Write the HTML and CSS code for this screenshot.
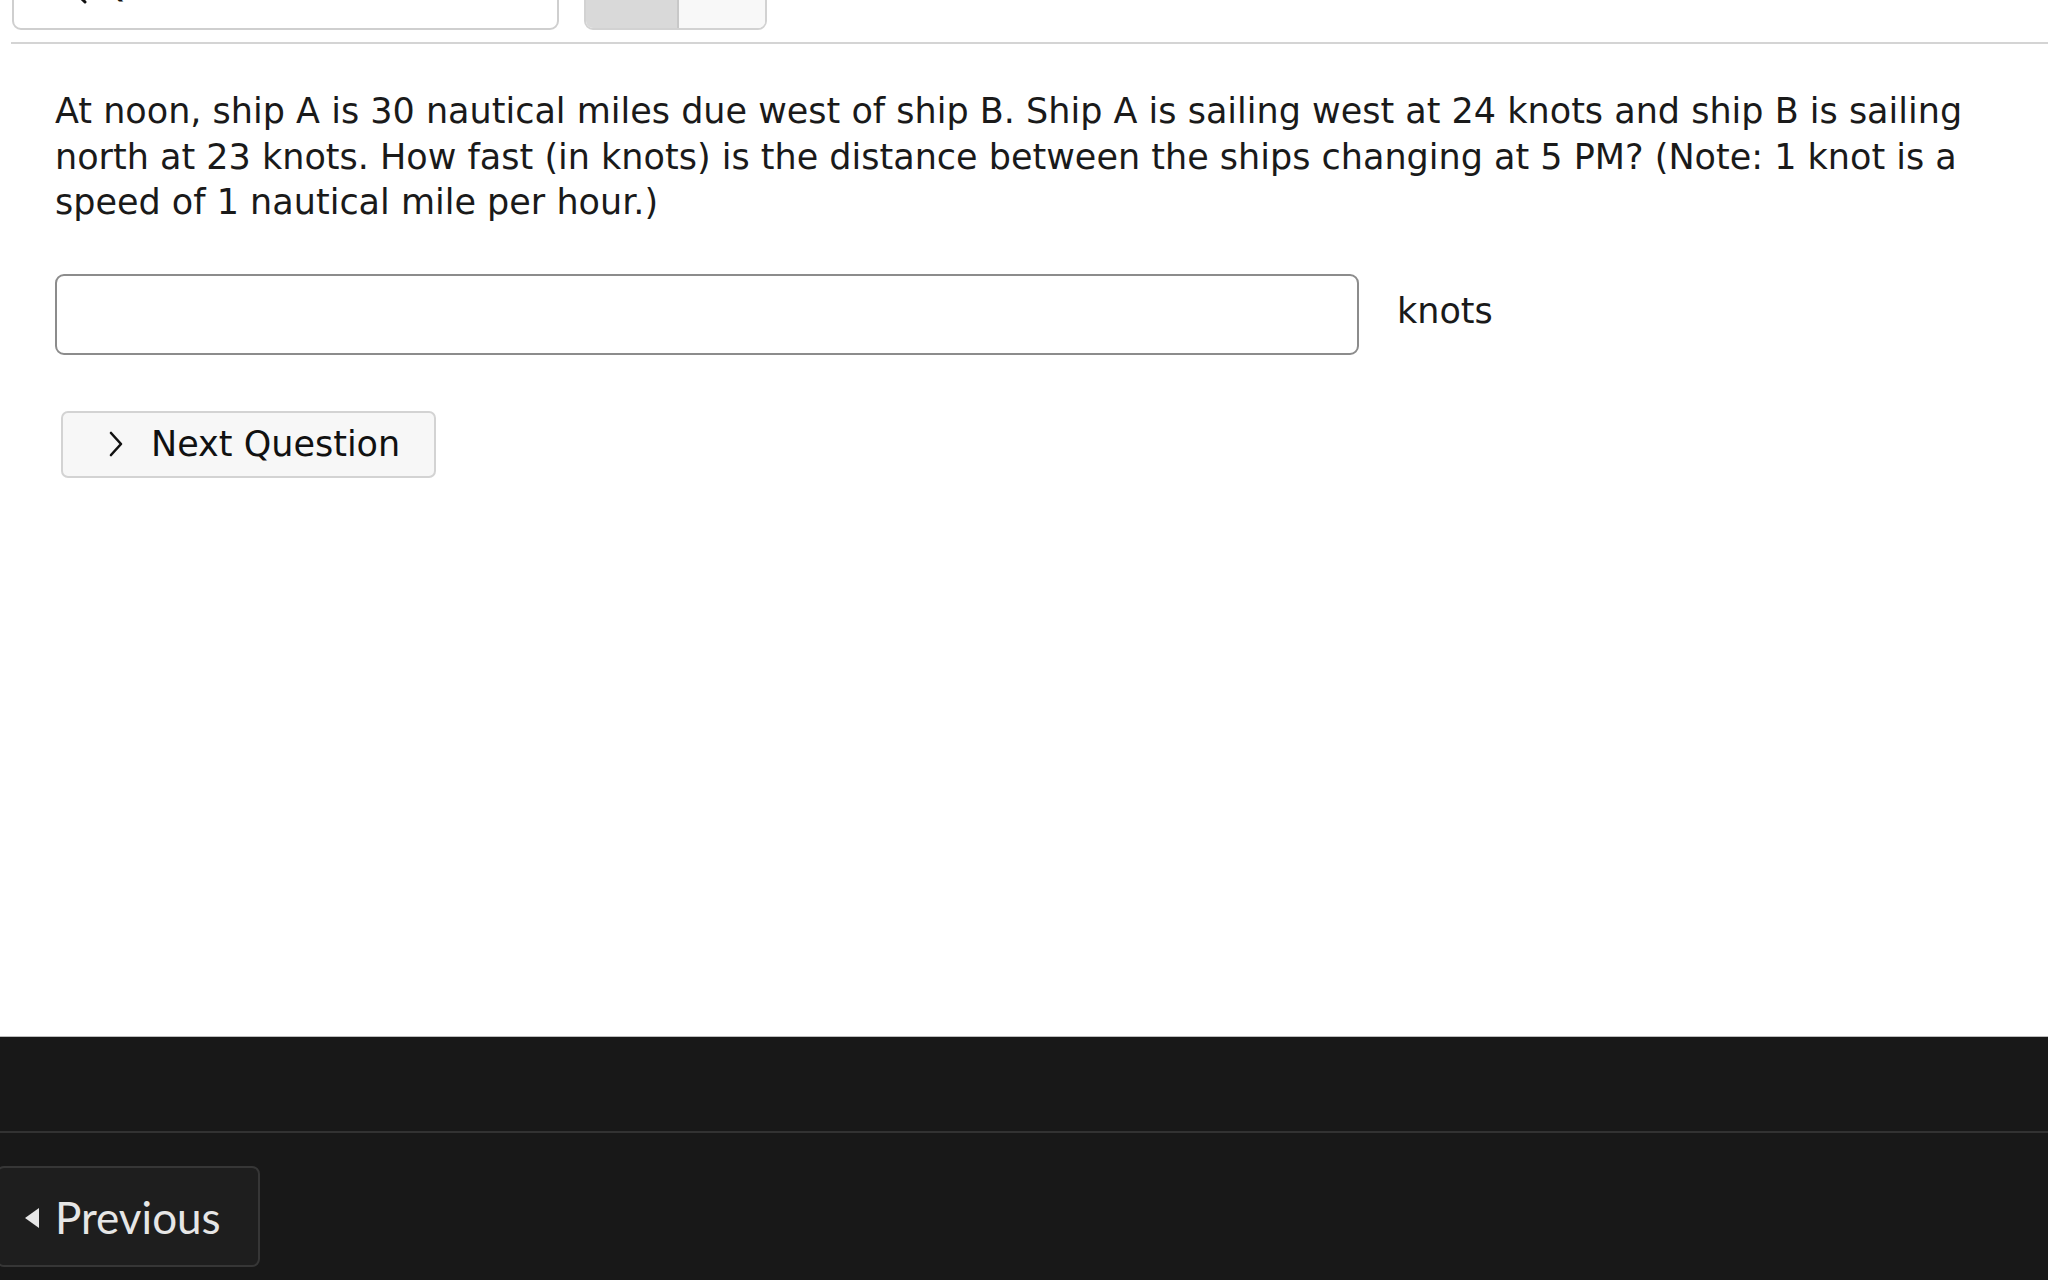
FILE: index.html
```html
<!DOCTYPE html>
<html lang="en">
<head>
<meta charset="utf-8">
<title>Question</title>
<link rel="stylesheet" href="styles.css">
</head>
<body>
<div class="page">
  <div class="toolbar">
    <div class="search-box">
      <svg class="search-icon" width="30" height="30" viewBox="0 0 30 30"><circle cx="13" cy="13" r="10" fill="none" stroke="#111" stroke-width="3"/><path d="M20 20 L27 27" stroke="#111" stroke-width="3" stroke-linecap="round"/></svg>
      <span class="search-label">Question</span>
    </div>
    <div class="seg-group">
      <div class="seg seg-active"></div>
      <div class="seg"></div>
    </div>
  </div>
  <div class="rule"></div>
  <main class="content">
    <p class="question">At noon, ship A is 30 nautical miles due west of ship B. Ship A is sailing west at 24 knots and ship B is sailing north at 23 knots. How fast (in knots) is the distance between the ships changing at 5 PM? (Note: 1 knot is a speed of 1 nautical mile per hour.)</p>
    <div class="answer-row">
      <input class="answer-input" type="text" aria-label="answer">
      <span class="unit">knots</span>
    </div>
    <button class="next-btn" type="button">
      <svg class="chev" width="18" height="28" viewBox="0 0 18 28"><path d="M4 3 L14 14 L4 25" fill="none" stroke="#111" stroke-width="2.6" stroke-linecap="round" stroke-linejoin="round"/></svg>
      <span>Next Question</span>
    </button>
  </main>
  <footer class="footer">
    <div class="footer-top"></div>
    <div class="footer-nav">
      <button class="prev-btn" type="button"><span class="tri"></span><span>Previous</span></button>
    </div>
  </footer>
</div>
</body>
</html>
```
FILE: styles.css
```css
html, body {
  margin: 0;
  padding: 0;
  background: #ffffff;
  overflow: hidden;
}
.page {
  height: 1280px;
  display: flex;
  flex-direction: column;
  font-family: "DejaVu Sans", "Open Sans", sans-serif;
  color: #1a1a1a;
}
.toolbar {
  display: flex;
  align-items: flex-end;
  gap: 25px;
  padding-left: 12px;
  margin-top: -34px;
  height: 64px;
  flex: none;
}
.search-box {
  width: 547px;
  height: 60px;
  border: 2px solid #cfcfcf;
  border-radius: 9px;
  box-sizing: border-box;
  position: relative;
  overflow: hidden;
}
.search-icon {
  position: absolute;
  left: 44px;
  top: 3px;
}
.search-label {
  position: absolute;
  left: 86px;
  top: -5px;
  font-size: 35px;
  line-height: 36px;
  color: #111;
}
.seg-group {
  display: flex;
  width: 183px;
  height: 60px;
  border: 2px solid #d2d2d2;
  border-radius: 9px;
  box-sizing: border-box;
  overflow: hidden;
}
.seg {
  flex: 1;
  background: #f8f8f8;
}
.seg-active {
  flex: none;
  width: 91px;
  background: #d9d9d9;
  border-right: 2px solid #c8c8c8;
}
.rule {
  flex: none;
  height: 2px;
  margin: 12px 0 0 11px;
  background: #d4d4d4;
}
.content {
  flex: 1;
  padding: 0 54px 0 55px;
}
.question {
  margin: 45px 0 0;
  font-size: 35px;
  line-height: 45.5px;
  color: #1a1a1a;
}
.answer-row {
  display: flex;
  align-items: center;
  gap: 38px;
  margin-top: 48px;
}
.answer-input {
  width: 1304px;
  height: 81px;
  box-sizing: border-box;
  border: 2px solid #8c8c8c;
  border-radius: 9px;
  background: #fff;
  font-size: 35px;
  padding: 0 16px;
  margin: 0;
}
.unit {
  font-size: 35px;
  line-height: 40px;
  color: #1a1a1a;
  margin-top: -6px;
}
.next-btn {
  display: flex;
  align-items: center;
  gap: 26px;
  margin: 56px 0 0 6px;
  width: 375px;
  height: 67px;
  box-sizing: border-box;
  padding: 0 0 0 44px;
  border: 2px solid #d3d3d3;
  border-radius: 7px;
  background: #f7f7f7;
  font-family: "DejaVu Sans", "Open Sans", sans-serif;
  font-size: 35px;
  color: #111;
  cursor: pointer;
}
.chev {
  flex: none;
}
.footer {
  flex: none;
  height: 244px;
  background: #181818;
  border-top: 1px solid #bdbdbd;
  box-sizing: border-box;
}
.footer-top {
  height: 94px;
  border-bottom: 2px solid #323232;
}
.footer-nav {
  padding-top: 33px;
}
.prev-btn {
  display: flex;
  align-items: center;
  gap: 16px;
  margin-left: -4px;
  width: 264px;
  height: 101px;
  box-sizing: border-box;
  padding: 0 0 0 27px;
  background: #1e1e1e;
  border: 2px solid #363636;
  border-radius: 8px;
  font-family: "Lato", "Open Sans", sans-serif;
  font-size: 44px;
  color: #e6e6e6;
  cursor: pointer;
}
.tri {
  width: 0;
  height: 0;
  border-top: 10px solid transparent;
  border-bottom: 10px solid transparent;
  border-right: 14px solid #e6e6e6;
  margin-top: 2px;
}
```
